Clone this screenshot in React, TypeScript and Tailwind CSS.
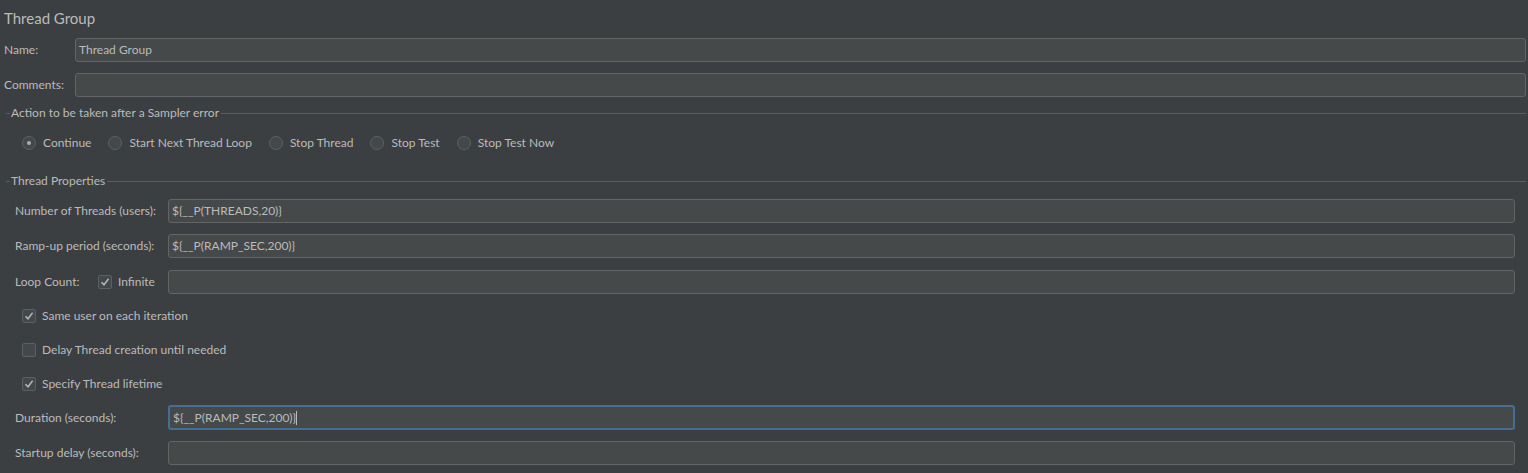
import React from 'react';

const font = { fontFamily: 'Lato, "Liberation Sans", sans-serif' };

function TextBox({ value, focused, caret }: { value?: string; focused?: boolean; caret?: boolean }) {
  return (
    <div
      className={`flex-1 h-full flex items-center rounded-[3px] bg-[#45494a] px-[3px] ${
        focused ? 'border-2 border-[#466d94]' : 'border border-[#646464]'
      }`}
    >
      <span className="whitespace-pre">{value}</span>
      {caret && <span className="w-px h-[14px] bg-[#bbbbbb]" />}
    </div>
  );
}

function Radio({ label, checked }: { label: string; checked?: boolean }) {
  return (
    <div className="flex items-center gap-[7px] mr-[17px]">
      <span className="w-[14px] h-[14px] rounded-full border border-[#5e6060] bg-[#43494a] flex items-center justify-center">
        {checked && <span className="w-[4px] h-[4px] rounded-full bg-[#a9abad]" />}
      </span>
      <span>{label}</span>
    </div>
  );
}

function Check({ checked }: { checked?: boolean }) {
  return (
    <span className="w-[14px] h-[14px] rounded-[2px] border border-[#5e6060] bg-[#43494a] flex items-center justify-center">
      {checked && (
        <svg width="10" height="10" viewBox="0 0 10 10" fill="none">
          <path d="M1.5 5.2 L4 7.8 L8.6 1.8" stroke="#b4b6b8" strokeWidth="1.5" />
        </svg>
      )}
    </span>
  );
}

function Section({ title }: { title: string }) {
  return (
    <div className="flex items-center h-[16px] pl-[6px] pr-[2px]">
      <span className="w-[4px] h-px bg-[#5b5d5f]" />
      <span className="px-[1px]">{title}</span>
      <span className="flex-1 h-px bg-[#5b5d5f] ml-[1px]" />
    </div>
  );
}

function PropRow({ label, value, focused, caret }: { label: string; value?: string; focused?: boolean; caret?: boolean }) {
  return (
    <div className="flex items-center h-[24px] pl-[15px] pr-[13px]">
      <span className="w-[153px] shrink-0">{label}</span>
      <TextBox value={value} focused={focused} caret={caret} />
    </div>
  );
}

function CheckRow({ label, checked }: { label: string; checked?: boolean }) {
  return (
    <div className="flex items-center gap-[6px] h-[16px] pl-[22px]">
      <Check checked={checked} />
      <span>{label}</span>
    </div>
  );
}

export default function App() {
  return (
    <div className="w-full h-[473px] overflow-hidden bg-[#3c3f41] text-[#bbbbbb] text-[12px]" style={font}>
      {/* Title */}
      <div className="h-[38px] flex items-center pl-[4px] pb-[1px] text-[15px]">Thread Group</div>

      {/* Name / Comments */}
      <div className="flex flex-col gap-[11px]">
        <div className="flex items-center h-[24px] pl-[4px] pr-[2px]">
          <span className="w-[71px] shrink-0">Name:</span>
          <TextBox value="Thread Group" />
        </div>
        <div className="flex items-center h-[24px] pl-[4px] pr-[2px]">
          <span className="w-[71px] shrink-0">Comments:</span>
          <TextBox />
        </div>
      </div>

      {/* Sampler error action */}
      <div className="mt-[8px]">
        <Section title="Action to be taken after a Sampler error" />
      </div>
      <div className="flex items-center h-[16px] mt-[14px] pl-[22px]">
        <Radio label="Continue" checked />
        <Radio label="Start Next Thread Loop" />
        <Radio label="Stop Thread" />
        <Radio label="Stop Test" />
        <Radio label="Stop Test Now" />
      </div>

      {/* Thread properties */}
      <div className="mt-[22px]">
        <Section title="Thread Properties" />
      </div>
      <div className="flex flex-col gap-[11px] mt-[10px]">
        <PropRow label="Number of Threads (users):" value="${__P(THREADS,20)}" />
        <PropRow label="Ramp-up period (seconds):" value="${__P(RAMP_SEC,200)}" />
        <div className="flex items-center h-[24px] pl-[15px] pr-[13px] mt-[1px]">
          <span className="w-[83px] shrink-0">Loop Count:</span>
          <div className="w-[70px] shrink-0 flex items-center gap-[6px]">
            <Check checked />
            <span>Infinite</span>
          </div>
          <TextBox />
        </div>
      </div>
      <div className="flex flex-col gap-[18px] mt-[14px]">
        <CheckRow label="Same user on each iteration" checked />
        <CheckRow label="Delay Thread creation until needed" />
        <CheckRow label="Specify Thread lifetime" checked />
      </div>
      <div className="flex flex-col gap-[11px] mt-[13px]">
        <div className="flex items-center h-[25px] pl-[15px] pr-[13px]">
          <span className="w-[153px] shrink-0">Duration (seconds):</span>
          <TextBox value="${__P(RAMP_SEC,200)}" focused caret />
        </div>
        <PropRow label="Startup delay (seconds):" />
      </div>
    </div>
  );
}
